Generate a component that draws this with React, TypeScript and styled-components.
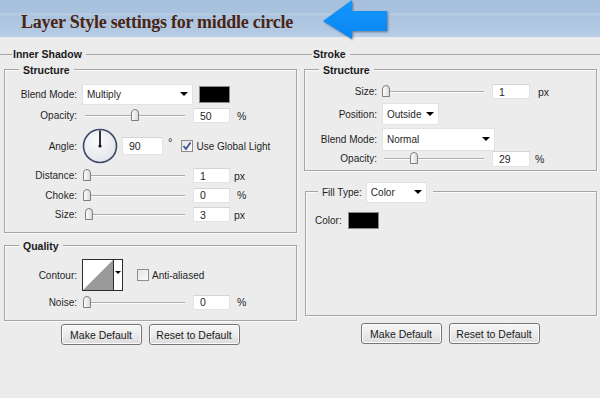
import React from "react";
import styled, { createGlobalStyle } from "styled-components";

const GlobalStyle = createGlobalStyle`
  html, body { margin: 0; padding: 0; background: #ececec; }
  body {
    font-family: "Liberation Sans", Arial, sans-serif;
    font-size: 10px;
    color: #1f1f1f;
  }
  #root { width: 600px; height: 398px; overflow: hidden; }
`;

const Page = styled.div`
  width: 600px;
  height: 398px;
  background: #ececec;
  display: flex;
  flex-direction: column;
`;

const Header = styled.header`
  height: 37px;
  flex-shrink: 0;
  position: relative;
  z-index: 1;
  display: flex;
  align-items: flex-start;
  padding-left: 21px;
  background: linear-gradient(
    to bottom,
    #a6c0dd 0px,
    #a9c3df 13px,
    #bccfe4 14px,
    #abc4e0 16px,
    #b2c9e3 30px,
    #b9cee6 37px
  );
`;

const Title = styled.h1`
  margin: 11px 0 0 0;
  width: 302px;
  flex-shrink: 0;
  font-family: "Liberation Serif", "DejaVu Serif", serif;
  font-weight: bold;
  font-size: 18px;
  line-height: 22px;
  color: #4a2514;
  letter-spacing: -0.25px;
  white-space: nowrap;
`;

const ArrowSvg = styled.svg`
  flex-shrink: 0;
  display: block;
  filter: drop-shadow(1px 1px 1px rgba(40, 50, 70, 0.55));
`;

const Columns = styled.div`
  display: grid;
  grid-template-columns: 300px 300px;
  flex: 1;
`;

const Column = styled.section`
  display: flex;
  flex-direction: column;
`;

const SectionTitle = styled.div`
  margin-top: 10px;
  height: 14px;
  display: flex;
  align-items: center;
  font-weight: bold;
  font-size: 10.5px;
  color: #1a1a1a;
  &::before {
    content: "";
    width: 12px;
    height: 1px;
    background: #a6a6a6;
    margin-right: 1px;
  }
  &::after {
    content: "";
    flex: 1;
    height: 1px;
    background: #a6a6a6;
    margin-left: 4px;
  }
`;

const Group = styled.div<{ $mt: number; $ml?: number; $pb?: number; $h?: number }>`
  margin: ${(p) => p.$mt}px 3px 0 ${(p) => p.$ml ?? 4}px;
  border: 1px solid #a5a5a5;
  box-shadow: inset 1px 1px 0 #fafafa, 1px 1px 0 #fafafa;
  padding-bottom: ${(p) => p.$pb ?? 0}px;
  ${(p) => (p.$h ? `height: ${p.$h}px; box-sizing: border-box;` : "")}
  display: flex;
  flex-direction: column;
`;

const Legend = styled.div<{ $mb: number }>`
  margin: -7px 0 ${(p) => p.$mb}px 14px;
  padding: 0 4px;
  height: 14px;
  line-height: 14px;
  width: fit-content;
  background: #ececec;
  font-weight: bold;
  font-size: 10.5px;
  color: #1a1a1a;
`;

const FillLegend = styled.div`
  margin: -11px 0 8px 12px;
  padding: 0 6px 0 4px;
  height: 22px;
  width: fit-content;
  background: #ececec;
  display: flex;
  align-items: center;
  gap: 4px;
`;

const Row = styled.div<{ $h: number; $pl?: number }>`
  height: ${(p) => p.$h}px;
  display: flex;
  align-items: center;
  padding-left: ${(p) => p.$pl ?? 0}px;
`;

const Label = styled.span`
  width: 72px;
  margin-right: 5px;
  text-align: right;
  flex-shrink: 0;
  white-space: nowrap;
`;

const PlainLabel = styled.span`
  white-space: nowrap;
  margin-right: 6px;
`;

const SelectBox = styled.div<{ $w: number; $h?: number }>`
  width: ${(p) => p.$w}px;
  height: ${(p) => p.$h ?? 21}px;
  box-sizing: border-box;
  background: #fff;
  border: 1px solid #e2e2e2;
  display: flex;
  align-items: center;
  justify-content: space-between;
  padding: 0 4px 0 4px;
  font-size: 10px;
  flex-shrink: 0;
`;

const Caret = styled.span`
  width: 0;
  height: 0;
  border-left: 4px solid transparent;
  border-right: 4px solid transparent;
  border-top: 4px solid #000;
`;

const Swatch = styled.div<{ $ml: number }>`
  margin-left: ${(p) => p.$ml}px;
  width: 31px;
  height: 17px;
  box-sizing: border-box;
  background: #000;
  border: 1px solid #8a8a8a;
  flex-shrink: 0;
`;

const SliderWrap = styled.div<{ $ml: number }>`
  position: relative;
  margin-left: ${(p) => p.$ml}px;
  width: 100px;
  height: 13px;
  flex-shrink: 0;
  &::before {
    content: "";
    position: absolute;
    left: 0;
    right: 0;
    top: 6px;
    height: 1px;
    background: #ababab;
    box-shadow: 0 1px 0 #fdfdfd;
  }
`;

const Thumb = styled.svg`
  position: absolute;
  top: 0;
  display: block;
`;

const NumInput = styled.div<{ $w: number; $h?: number; $ml: number }>`
  margin-left: ${(p) => p.$ml}px;
  width: ${(p) => p.$w}px;
  height: ${(p) => p.$h ?? 15}px;
  box-sizing: border-box;
  background: #fff;
  border: 1px solid #e3e3e3;
  border-top-color: #d4d4d4;
  padding-left: 6px;
  display: flex;
  align-items: center;
  font-size: 10.5px;
  flex-shrink: 0;
`;

const Unit = styled.span<{ $ml: number }>`
  margin-left: ${(p) => p.$ml}px;
  font-size: 10.5px;
`;

const Degree = styled.span`
  margin-left: 5px;
  align-self: flex-start;
  margin-top: 10px;
  font-size: 11px;
`;

const Check = styled.span<{ $ml: number }>`
  margin-left: ${(p) => p.$ml}px;
  margin-right: 3px;
  width: 12px;
  height: 12px;
  box-sizing: border-box;
  border: 1px solid #8c8c8c;
  background: linear-gradient(135deg, #e4e4e4, #fbfbfb);
  display: flex;
  align-items: center;
  justify-content: center;
  flex-shrink: 0;
`;

const CheckText = styled.span`
  font-size: 10px;
  white-space: nowrap;
`;

const ContourBox = styled.div`
  width: 41px;
  height: 32px;
  box-sizing: border-box;
  border: 1px solid #2c2c2c;
  display: flex;
  background: #fff;
  flex-shrink: 0;
`;

const ContourDrop = styled.div`
  flex: 1;
  border-left: 1px solid #2c2c2c;
  display: flex;
  align-items: center;
  justify-content: center;
  padding-bottom: 6px;
  & > span {
    border-left-width: 3px;
    border-right-width: 3px;
    border-top-width: 3px;
  }
`;

const ButtonRow = styled.div<{ $mt: number }>`
  margin-top: ${(p) => p.$mt}px;
  display: flex;
  justify-content: center;
  gap: 7px;
`;

const Button = styled.div<{ $w: number }>`
  width: ${(p) => p.$w}px;
  height: 21px;
  box-sizing: border-box;
  border: 1px solid #767676;
  border-radius: 3px;
  background: linear-gradient(to bottom, #f7f7f7 0%, #ebebeb 50%, #dcdcdc 100%);
  box-shadow: inset 0 0 0 1px #fdfdfd;
  display: flex;
  align-items: center;
  justify-content: center;
  font-size: 10.5px;
  color: #1a1a1a;
`;

const Select = ({ w, h, value }: { w: number; h?: number; value: string }) => (
  <SelectBox $w={w} $h={h}>
    <span>{value}</span>
    <Caret />
  </SelectBox>
);

const Slider = ({ value, ml }: { value: number; ml: number }) => (
  <SliderWrap $ml={ml}>
    <Thumb width="8" height="12" viewBox="0 0 8 12" style={{ left: `${value - 4}px` }}>
      <defs>
        <linearGradient id="tg" x1="0" x2="1" y1="0" y2="0">
          <stop offset="0" stopColor="#ffffff" />
          <stop offset="1" stopColor="#d8d8d8" />
        </linearGradient>
      </defs>
      <path d="M0.5 11.5 V4 A3.5 3.5 0 0 1 7.5 4 V11.5 Z" fill="url(#tg)" stroke="#7e7e7e" strokeWidth="1" />
    </Thumb>
  </SliderWrap>
);

const CheckMark = () => (
  <svg width="10" height="10" viewBox="0 0 10 10">
    <path d="M1.5 5 L4 8 L8.5 1.5" fill="none" stroke="#3b5690" strokeWidth="1.8" />
  </svg>
);

const Dial = () => (
  <svg width="36" height="36" viewBox="0 0 36 36" style={{ flexShrink: 0 }}>
    <defs>
      <radialGradient id="dg" cx="0.4" cy="0.35" r="0.7">
        <stop offset="0" stopColor="#fbfbfd" />
        <stop offset="1" stopColor="#e2e4ea" />
      </radialGradient>
    </defs>
    <circle cx="18" cy="18" r="16.5" fill="url(#dg)" stroke="#3e4966" strokeWidth="1.6" />
    <line x1="18" y1="18" x2="18" y2="2.5" stroke="#111" strokeWidth="1.7" />
    <circle cx="18" cy="18" r="1.6" fill="#111" />
  </svg>
);

const ContourIcon = () => (
  <svg width="30" height="30" viewBox="0 0 30 30" style={{ display: "block" }}>
    <rect x="0" y="0" width="30" height="30" fill="#fff" />
    <polygon points="0,30 30,0 30,30" fill="#9a9a9a" />
  </svg>
);

const Arrow = () => (
  <ArrowSvg width="66" height="40" viewBox="0 0 66 40">
    <defs>
      <linearGradient id="ag" x1="0" x2="0" y1="0" y2="1">
        <stop offset="0" stopColor="#1596fb" />
        <stop offset="1" stopColor="#0886f3" />
      </linearGradient>
    </defs>
    <polygon points="0,21 29,0 29,11 64,11 64,31 29,31 29,39" fill="url(#ag)" />
  </ArrowSvg>
);

export default function App() {
  return (
    <>
      <GlobalStyle />
      <Page>
        <Header>
          <Title>Layer Style settings for middle circle</Title>
          <Arrow />
        </Header>
        <Columns>
          <Column>
            <SectionTitle>Inner Shadow</SectionTitle>
            <Group $mt={8} $pb={8}>
              <Legend $mb={6}>Structure</Legend>
              <Row $h={22}>
                <Label>Blend Mode:</Label>
                <Select w={111} value="Multiply" />
                <Swatch $ml={6} />
              </Row>
              <Row $h={21}>
                <Label>Opacity:</Label>
                <Slider value={50} ml={3} />
                <NumInput $w={37} $ml={8}>50</NumInput>
                <Unit $ml={7}>%</Unit>
              </Row>
              <Row $h={40}>
                <Label>Angle:</Label>
                <Dial />
                <NumInput $w={41} $h={18} $ml={4}>90</NumInput>
                <Degree>°</Degree>
                <Check $ml={9}>
                  <CheckMark />
                </Check>
                <CheckText>Use Global Light</CheckText>
              </Row>
              <Row $h={19}>
                <Label>Distance:</Label>
                <Slider value={2} ml={3} />
                <NumInput $w={37} $ml={8}>1</NumInput>
                <Unit $ml={4}>px</Unit>
              </Row>
              <Row $h={20}>
                <Label>Choke:</Label>
                <Slider value={2} ml={3} />
                <NumInput $w={37} $ml={8}>0</NumInput>
                <Unit $ml={7}>%</Unit>
              </Row>
              <Row $h={19}>
                <Label>Size:</Label>
                <Slider value={4} ml={3} />
                <NumInput $w={37} $ml={8}>3</NumInput>
                <Unit $ml={4}>px</Unit>
              </Row>
            </Group>
            <Group $mt={12} $pb={9}>
              <Legend $mb={4}>Quality</Legend>
              <Row $h={36}>
                <Label>Contour:</Label>
                <ContourBox>
                  <ContourIcon />
                  <ContourDrop>
                    <Caret />
                  </ContourDrop>
                </ContourBox>
                <Check $ml={14} />
                <CheckText>Anti-aliased</CheckText>
              </Row>
              <Row $h={18}>
                <Label>Noise:</Label>
                <Slider value={2} ml={3} />
                <NumInput $w={37} $ml={8}>0</NumInput>
                <Unit $ml={7}>%</Unit>
              </Row>
            </Group>
            <ButtonRow $mt={3}>
              <Button $w={81}>Make Default</Button>
              <Button $w={91}>Reset to Default</Button>
            </ButtonRow>
          </Column>
          <Column>
            <SectionTitle>Stroke</SectionTitle>
            <Group $mt={8} $pb={4}>
              <Legend $mb={5}>Structure</Legend>
              <Row $h={19}>
                <Label>Size:</Label>
                <Slider value={2} ml={2} />
                <NumInput $w={38} $ml={8}>1</NumInput>
                <Unit $ml={8}>px</Unit>
              </Row>
              <Row $h={26}>
                <Label>Position:</Label>
                <Select w={57} h={22} value="Outside" />
              </Row>
              <Row $h={24}>
                <Label>Blend Mode:</Label>
                <Select w={113} h={23} value="Normal" />
              </Row>
              <Row $h={15}>
                <Label>Opacity:</Label>
                <Slider value={30} ml={2} />
                <NumInput $w={38} $h={16} $ml={8}>29</NumInput>
                <Unit $ml={5}>%</Unit>
              </Row>
            </Group>
            <Group $mt={20} $ml={5} $h={125}>
              <FillLegend>
                <span>Fill Type:</span>
                <Select w={61} value="Color" />
              </FillLegend>
              <Row $h={18} $pl={9}>
                <PlainLabel>Color:</PlainLabel>
                <Swatch $ml={0} />
              </Row>
            </Group>
            <ButtonRow $mt={7}>
              <Button $w={81}>Make Default</Button>
              <Button $w={91}>Reset to Default</Button>
            </ButtonRow>
          </Column>
        </Columns>
      </Page>
    </>
  );
}
